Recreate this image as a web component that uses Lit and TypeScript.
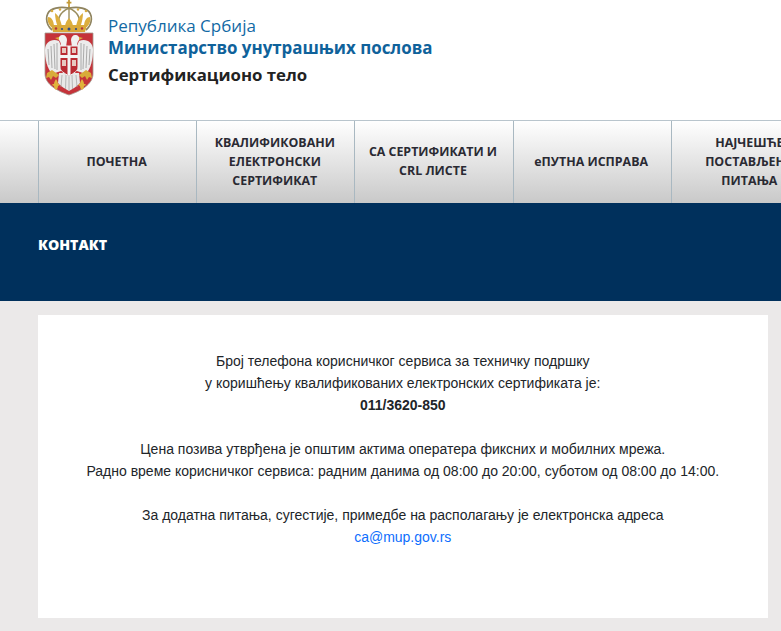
import { LitElement, html, css, svg } from "lit";
import { customElement } from "lit/decorators.js";

const halfCrown = svg`
  <path d="M52 30C45 24 45 14 51 10c5-3 12-3 18-2" fill="none" stroke="#8f8460" stroke-width="1.7"/>
  <path d="M60 27c-3-6-2-14 9-19" fill="none" stroke="#9a8d5e" stroke-width="1.5"/>
  <path d="M48 17c3 0 6 3 6 10h-3c-3-3-4-7-3-10zM55 13c3 2 6 7 7 14h-4c-2-4-3-10-3-14z" fill="#dcae3d"/>
  <circle cx="52" cy="11" r="1.3" fill="#d7ab3f"/><circle cx="60" cy="9.5" r="1.2" fill="#d7ab3f"/>
`;
const halfShield = svg`
  <path d="M59 40c-1-3 1-5 4-5 2 0 4 2 4 5l-1 7h-5c0-2 0-5-2-7z" fill="#f0f0f0"/>
  <path d="M59 37l-4 1 4 2z" fill="#dcae3d"/>
  <path d="M59 41c-7-3-14 1-14 9 0 9 2 18 7 24l9-3V46z" fill="#ececec"/>
  <path d="M48 49l1 16M51 46l1 22M54 44l1 25M57 43v27" stroke="#a3a3a3" stroke-width=".9" fill="none"/>
  <path d="M47 73l5-3 7 5-3 3-3-2-2 4-2-3-3 1z" fill="#d8ac3a"/>
  <path d="M56 79c1 2 2 3 2 5 1 0 2 0 2 1l-2 1c0 2-1 3-2 4-1-1-2-2-2-4l-2-1c0-1 1-1 2-1 0-2 1-3 2-5z" fill="#e0b43c"/>
`;
const crest = svg`
<svg class="crest" viewBox="42 0 54 98" width="54" height="98" aria-hidden="true">
  <path d="M69 0v7M66.6 2.6h4.8" stroke="#c49a35" stroke-width="1.7" fill="none"/>
  <circle cx="69" cy="8" r="1.6" fill="#c49a35"/>
  ${halfCrown}
  <g transform="translate(138,0) scale(-1,1)">${halfCrown}</g>
  <path d="M69 9v18" stroke="#9a8d5e" stroke-width="1.4"/>
  <path d="M65 27c0-4 2-7 4-9 2 2 4 5 4 9z" fill="#dcae3d"/>
  <path d="M51 25h36l-2 7H53z" fill="#d9a93a"/>
  <circle cx="56" cy="28.5" r="1.2" fill="#b5343a"/><circle cx="62" cy="29" r="1.1" fill="#2d4a8a"/><circle cx="69" cy="29" r="1.5" fill="#2d4a8a"/><circle cx="76" cy="29" r="1.1" fill="#2d4a8a"/><circle cx="82" cy="28.5" r="1.2" fill="#b5343a"/>
  <path d="M45 33h48v41c0 10-12 17-24 21-12-4-24-11-24-21z" fill="#c5333a" stroke="#a39a90" stroke-width=".8"/>
  ${halfShield}
  <g transform="translate(138,0) scale(-1,1)">${halfShield}</g>
  <path d="M59 73h20l1 10c-3 3-7 6-11 8-4-2-8-5-11-8z" fill="#e8e8e8"/>
  <path d="M62 75l-1 12M66 75l-.5 14M69 75v16M72 75l.5 14M76 75l1 12" stroke="#a8a8a8" stroke-width=".8"/>
  <path d="M60 46h18v21c0 4-4 6-9 9-5-3-9-5-9-9z" fill="#ba2b33" stroke="#eeeeee" stroke-width="1"/>
  <path d="M67.5 46h3v9h7.5v3h-7.5v17h-3V58H60v-3h7.5z" fill="#f4f4f4"/>
  <path d="M62 48h4v5h-4zM72 48h4v5h-4zM62 60h4v6h-4zM72 60h4v6h-4z" fill="#e7c8c0"/>
</svg>`;

const NAV = [
  ["ПОЧЕТНА"],
  ["КВАЛИФИКОВАНИ", "ЕЛЕКТРОНСКИ", "СЕРТИФИКАТ"],
  ["СА СЕРТИФИКАТИ И", "CRL ЛИСТЕ"],
  ["еПУТНА ИСПРАВА"],
  ["НАЈЧЕШЋЕ", "ПОСТАВЉЕНА", "ПИТАЊА"],
];

@customElement("app-root")
export class AppRoot extends LitElement {
  static styles = css`
    :host { display: block; width: 781px; height: 631px; overflow: hidden; background: #ebe9e9; }
    .head { height: 120px; background: #fff; padding: 0 0 0 42px; display: flex; align-items: flex-start; gap: 12px; box-sizing: border-box; }
    .crest { display: block; flex: none; }
    .titles { font-family: "Open Sans", sans-serif; padding-top: 14px; white-space: nowrap; }
    .t1 { color: #126aa5; font-size: 17px; line-height: 23px; }
    .t2 { color: #0f629b; font-size: 16.9px; line-height: 22px; font-weight: 700; }
    .t3 { color: #222; font-size: 16.8px; line-height: 22px; font-weight: 700; margin-top: 5px; }
    nav { display: flex; height: 83px; padding-left: 38px; box-sizing: border-box; border-top: 1px solid #b9c5cd;
      background: linear-gradient(#ffffff, #c9c9c9); overflow: hidden; }
    .item { flex: 0 0 158.2px; box-sizing: border-box; border-left: 1px solid #a9b8c1; display: flex; align-items: center; justify-content: center;
      flex-direction: column; padding: 0 2px 2px 0; font-family: "Open Sans", sans-serif; font-size: 12.4px; font-weight: 700; line-height: 19px; color: #2a2a33; white-space: nowrap; text-align: center; }
    .banner { height: 98px; background: #00305c; padding: 33px 0 0 38px; box-sizing: border-box; color: #fff;
      font-family: "Open Sans", sans-serif; font-size: 14.2px; font-weight: 800; line-height: 18px; }
    main { margin: 14px 13.5px 0 38px; height: 303px; background: #fff; padding-top: 35px; box-sizing: border-box;
      font-family: "Liberation Sans", Arial, sans-serif; font-size: 14px; line-height: 22px; color: #212529; text-align: center; }
    p { margin: 0 0 22px; }
    a { color: #0d6efd; text-decoration: none; }
    b { font-weight: 700; }
  `;

  render() {
    return html`
      <header class="head">
        ${crest}
        <div class="titles">
          <div class="t1">Република Србија</div>
          <div class="t2">Министарство унутрашњих послова</div>
          <div class="t3">Сертификационо тело</div>
        </div>
      </header>
      <nav>
        ${NAV.map((lines) => html`<div class="item">${lines.map((l) => html`<span>${l}</span>`)}</div>`)}
      </nav>
      <div class="banner">КОНТАКТ</div>
      <main>
        <p>Број телефона корисничког сервиса за техничку подршку<br />у коришћењу квалификованих електронских сертификата је:<br /><b>011/3620-850</b></p>
        <p>Цена позива утврђена је општим актима оператера фиксних и мобилних мрежа.<br />Радно време корисничког сервиса: радним данима од 08:00 до 20:00, суботом од 08:00 до 14:00.</p>
        <p>За додатна питања, сугестије, примедбе на располагању је електронска адреса<br /><a href="#">ca@mup.gov.rs</a></p>
      </main>
    `;
  }
}
